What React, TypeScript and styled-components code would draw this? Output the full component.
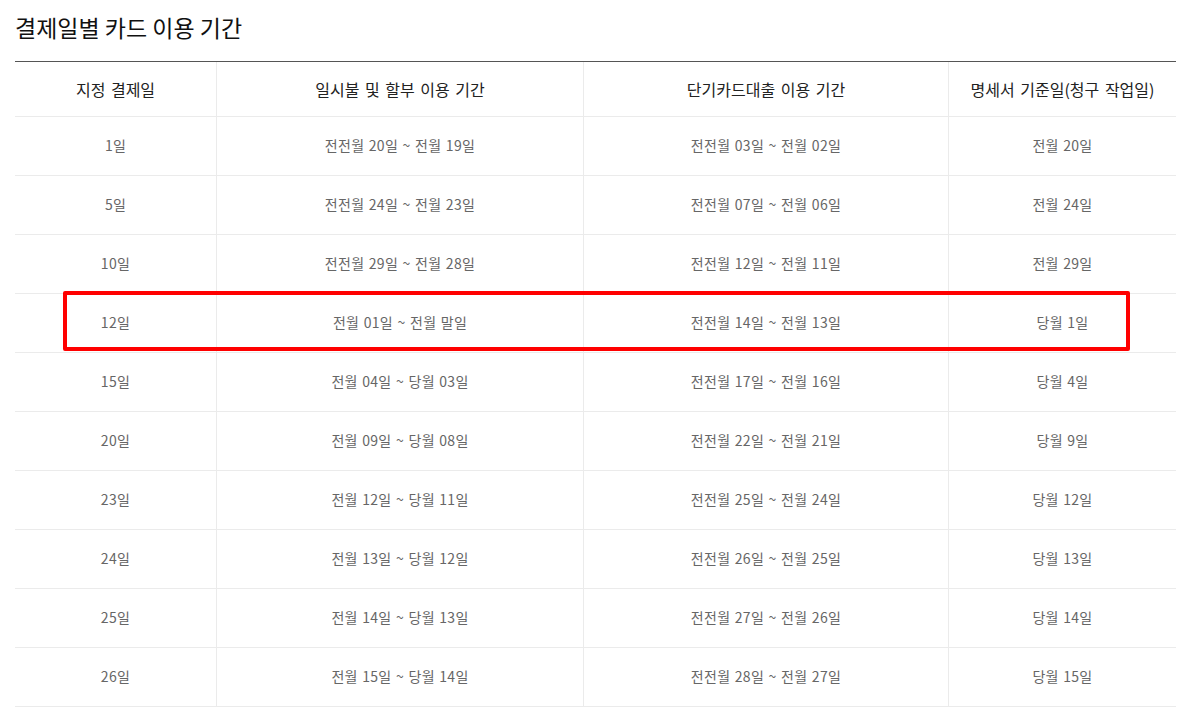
import React from "react";
import styled, { createGlobalStyle } from "styled-components";

const Global = createGlobalStyle`
  html, body { margin: 0; padding: 0; background: #fff; }
  body { font-family: "Noto Sans CJK KR", "Noto Sans", sans-serif; }
`;

const Page = styled.div`
  padding: 10px 26px 0 15px;
`;

const Title = styled.h2`
  margin: 0 0 17px;
  font-size: 23px;
  font-weight: 400;
  color: #111;
  letter-spacing: 0;
  line-height: 34px;
`;

const TableWrap = styled.div`
  position: relative;
  border-top: 1px solid #555;
`;

const Grid = styled.div`
  display: grid;
  grid-template-columns: 202px 367px 365px 1fr;
`;

const Cell = styled.div<{ $head?: boolean; $last?: boolean }>`
  display: flex;
  align-items: center;
  justify-content: center;
  box-sizing: border-box;
  height: ${(p) => (p.$head ? "55px" : "59px")};
  padding-bottom: ${(p) => (p.$head ? "0" : "2px")};
  border-bottom: 1px solid #ebebeb;
  border-right: ${(p) => (p.$last ? "none" : "1px solid #ebebeb")};
  font-size: ${(p) => (p.$head ? "16px" : "14px")};
  letter-spacing: ${(p) => (p.$head ? "0" : "0.3px")};
  word-spacing: ${(p) => (p.$head ? "2px" : "1px")};
  color: ${(p) => (p.$head ? "#222" : "#666")};
  white-space: nowrap;
`;

const Highlight = styled.div`
  position: absolute;
  left: 48px;
  top: 229px;
  width: 1067px;
  height: 60px;
  box-sizing: border-box;
  border: 4px solid #ff0000;
  border-radius: 2px;
  pointer-events: none;
`;

const headers = ["지정 결제일", "일시불 및 할부 이용 기간", "단기카드대출 이용 기간", "명세서 기준일(청구 작업일)"];

const rows: string[][] = [
  ["1일", "전전월 20일 ~ 전월 19일", "전전월 03일 ~ 전월 02일", "전월 20일"],
  ["5일", "전전월 24일 ~ 전월 23일", "전전월 07일 ~ 전월 06일", "전월 24일"],
  ["10일", "전전월 29일 ~ 전월 28일", "전전월 12일 ~ 전월 11일", "전월 29일"],
  ["12일", "전월 01일 ~ 전월 말일", "전전월 14일 ~ 전월 13일", "당월 1일"],
  ["15일", "전월 04일 ~ 당월 03일", "전전월 17일 ~ 전월 16일", "당월 4일"],
  ["20일", "전월 09일 ~ 당월 08일", "전전월 22일 ~ 전월 21일", "당월 9일"],
  ["23일", "전월 12일 ~ 당월 11일", "전전월 25일 ~ 전월 24일", "당월 12일"],
  ["24일", "전월 13일 ~ 당월 12일", "전전월 26일 ~ 전월 25일", "당월 13일"],
  ["25일", "전월 14일 ~ 당월 13일", "전전월 27일 ~ 전월 26일", "당월 14일"],
  ["26일", "전월 15일 ~ 당월 14일", "전전월 28일 ~ 전월 27일", "당월 15일"],
];

export default function App() {
  return (
    <>
      <Global />
      <Page>
        <Title>결제일별 카드 이용 기간</Title>
        <TableWrap>
          <Grid>
            {headers.map((h, i) => (
              <Cell key={h} $head $last={i === 3}>
                {h}
              </Cell>
            ))}
            {rows.map((r, ri) =>
              r.map((c, ci) => (
                <Cell key={`${ri}-${ci}`} $last={ci === 3}>
                  {c}
                </Cell>
              ))
            )}
          </Grid>
          <Highlight />
        </TableWrap>
      </Page>
    </>
  );
}
